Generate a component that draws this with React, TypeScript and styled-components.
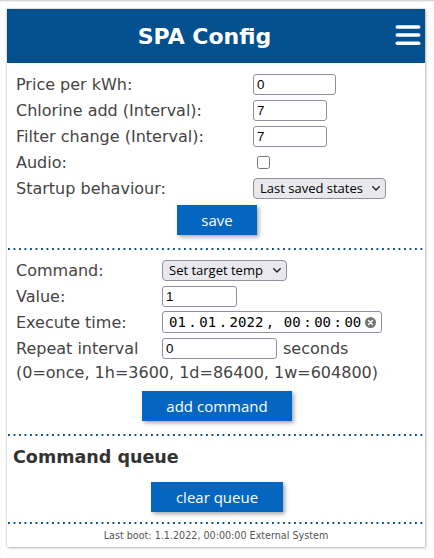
import React from 'react';
import styled, { createGlobalStyle } from 'styled-components';

const GlobalStyle = createGlobalStyle`
  html, body { margin: 0; padding: 0; background: #fff; }
  body { font-family: "DejaVu Sans", sans-serif; }
  * { box-sizing: border-box; }
`;

const BLUE = '#02508e';
const BUTTON_BLUE = '#0466c0';

const Page = styled.div`
  min-height: 558px;
  padding: 9px 0 0 7px;
  box-shadow: inset 0 2px 2px -1px rgba(0, 0, 0, 0.22);
`;

const Card = styled.div`
  width: 418px;
  background: #fff;
  box-shadow: 0 0 2px rgba(0, 0, 0, 0.3), 1px 1px 3px rgba(0, 0, 0, 0.2);
`;

const Header = styled.header`
  display: flex;
  align-items: center;
  height: 54px;
  padding: 0 4px 0 7px;
  background: ${BLUE};
  color: #fff;
`;

const Title = styled.h1`
  flex: 1;
  margin: 0;
  text-align: center;
  font: bold 22px "DejaVu Sans", sans-serif;
`;

const MenuIcon = styled.svg`
  display: block;
  width: 26px;
  height: 24px;
`;

/* sections are separated by a fine dotted rule */
const Section = styled.section<{ $pt: number; $pb: number }>`
  display: flex;
  flex-direction: column;
  padding: ${(p) => p.$pt}px 0 ${(p) => p.$pb + 2}px 0;
  background-image: linear-gradient(to right, ${BLUE} 1.8px, transparent 1.8px);
  background-size: 5.5px 2px;
  background-repeat: repeat-x;
  background-position: 1px 100%;
`;

const FormGrid = styled.div<{ $labelWidth: number }>`
  display: grid;
  grid-template-columns: ${(p) => p.$labelWidth}px auto;
  grid-auto-rows: 26px;
  align-items: center;
  justify-items: start;
  padding-left: 9px;
`;

const Label = styled.label`
  font-size: 16px;
  color: #444;
  white-space: nowrap;
`;

const Control = styled.div`
  display: flex;
  align-items: center;
`;

const TextInput = styled.input<{ $w: number }>`
  width: ${(p) => p.$w}px;
  height: 21px;
  margin: 0;
  padding: 1px 3px;
  border: 1px solid #8f8f9d;
  border-radius: 3px;
  background: #fff;
  font: 13.33px "Liberation Sans", Arial, sans-serif;
  color: #000;
`;

const Checkbox = styled.input`
  width: 13px;
  height: 13px;
  margin: 0 0 0 4px;
`;

const SelectBox = styled.div<{ $w: number }>`
  position: relative;
  width: ${(p) => p.$w}px;
  height: 21px;
`;

const Select = styled.select`
  appearance: none;
  width: 100%;
  height: 21px;
  margin: 0;
  padding: 0 0 0 6px;
  border: 1px solid #8f8f9d;
  border-radius: 4px;
  background: #e9e9ed;
  font: 13px "Open Sans", sans-serif;
  color: #000;
`;

const Chevron = styled.svg`
  position: absolute;
  right: 6px;
  top: 8px;
  width: 8px;
  height: 5px;
  pointer-events: none;
`;

const DateField = styled.div`
  display: flex;
  align-items: center;
  width: 220px;
  height: 22px;
  padding-left: 6px;
  border: 1px solid #8f8f9d;
  border-radius: 3px;
  font: 14px "DejaVu Sans Mono", monospace;
  color: #000;
  white-space: pre;
`;

const Sep = styled.span<{ $after?: number }>`
  margin: 0 ${(p) => p.$after ?? 2.5}px 0 2.5px;
`;

const ClearIcon = styled.svg`
  margin-left: 4px;
  width: 11px;
  height: 11px;
`;

const Unit = styled.span`
  margin-left: 6px;
  font-size: 16px;
  color: #444;
`;

const Hint = styled.p`
  margin: 2px 0 0 9px;
  font-size: 16px;
  color: #444;
`;

const ActionButton = styled.button<{ $w: number; $mt: number }>`
  align-self: center;
  width: ${(p) => p.$w}px;
  height: 30px;
  margin: ${(p) => p.$mt}px 0 0 2px;
  padding: 0;
  border: none;
  background: ${BUTTON_BLUE};
  color: #fff;
  font: 15px "Open Sans", sans-serif;
  box-shadow: 2px 2px 4px rgba(0, 0, 0, 0.35);
`;

const QueueTitle = styled.h3`
  margin: 0;
  padding-left: 6px;
  font: bold 17.55px "DejaVu Sans", sans-serif;
  color: #333;
`;

const Footer = styled.footer`
  padding: 6px 0 6px;
  text-align: center;
  font-size: 9.6px;
  color: #555;
`;

const SelectField = ({ width, value }: { width: number; value: string }) => (
  <SelectBox $w={width}>
    <Select defaultValue={value}>
      <option>{value}</option>
    </Select>
    <Chevron viewBox="0 0 8 5">
      <path d="M0.8 0.8 L4 4 L7.2 0.8" fill="none" stroke="#222" strokeWidth="1.4" strokeLinecap="round" strokeLinejoin="round" />
    </Chevron>
  </SelectBox>
);

export default function App() {
  return (
    <>
      <GlobalStyle />
      <Page>
        <Card>
          <Header>
            <Title>SPA Config</Title>
            <MenuIcon viewBox="0 0 26 24">
              <rect x="0.5" y="1.25" width="25" height="3.6" rx="1.8" fill="#fff" />
              <rect x="0.5" y="9.25" width="25" height="3.6" rx="1.8" fill="#fff" />
              <rect x="0.5" y="17.5" width="25" height="3.6" rx="1.8" fill="#fff" />
            </MenuIcon>
          </Header>

          <Section $pt={8} $pb={13}>
            <FormGrid $labelWidth={237}>
              <Label>Price per kWh:</Label>
              <TextInput $w={83} defaultValue="0" />
              <Label>Chlorine add (Interval):</Label>
              <TextInput $w={74} defaultValue="7" />
              <Label>Filter change (Interval):</Label>
              <TextInput $w={74} defaultValue="7" />
              <Label>Audio:</Label>
              <Checkbox type="checkbox" />
              <Label>Startup behaviour:</Label>
              <SelectField width={133} value="Last saved states" />
            </FormGrid>
            <ActionButton $w={80} $mt={4}>save</ActionButton>
          </Section>

          <Section $pt={7} $pb={13}>
            <FormGrid $labelWidth={146}>
              <Label>Command:</Label>
              <SelectField width={125} value="Set target temp" />
              <Label>Value:</Label>
              <TextInput $w={75} defaultValue="1" />
              <Label>Execute time:</Label>
              <DateField>
                <span>01</span>
                <Sep>.</Sep>
                <span>01</span>
                <Sep>.</Sep>
                <span>2022</span>
                <Sep $after={9.6}>,</Sep>
                <span>00</span>
                <Sep>:</Sep>
                <span>00</span>
                <Sep>:</Sep>
                <span>00</span>
                <ClearIcon viewBox="0 0 11 11">
                  <circle cx="5.5" cy="5.5" r="5.5" fill="#737373" />
                  <path d="M3.5 3.5 L7.5 7.5 M7.5 3.5 L3.5 7.5" stroke="#fff" strokeWidth="1.4" strokeLinecap="round" />
                </ClearIcon>
              </DateField>
              <Label>Repeat interval</Label>
              <Control>
                <TextInput $w={115} defaultValue="0" />
                <Unit>seconds</Unit>
              </Control>
            </FormGrid>
            <Hint>(0=once, 1h=3600, 1d=86400, 1w=604800)</Hint>
            <ActionButton $w={150} $mt={9}>add command</ActionButton>
          </Section>

          <Section $pt={11} $pb={10}>
            <QueueTitle>Command queue</QueueTitle>
            <ActionButton $w={132} $mt={15}>clear queue</ActionButton>
          </Section>

          <Footer>Last boot: 1.1.2022, 00:00:00 External System</Footer>
        </Card>
      </Page>
    </>
  );
}
